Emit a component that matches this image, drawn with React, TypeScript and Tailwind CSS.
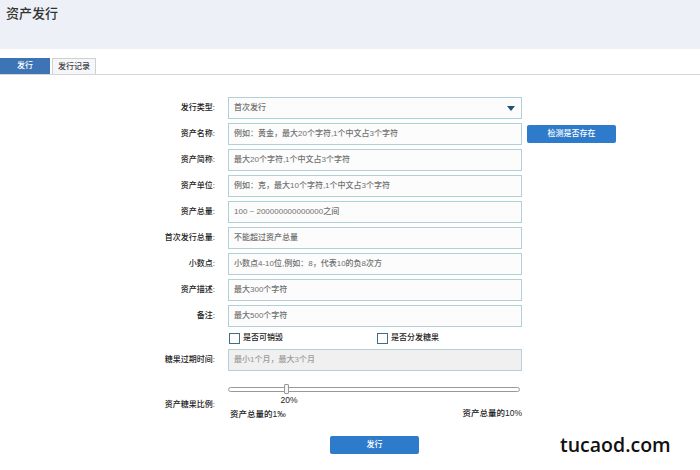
const font = { fontFamily: '"Liberation Sans", "Noto Sans CJK SC", sans-serif' };

const rows: { label: string; placeholder: string; select?: boolean; check?: boolean }[] = [
  { label: '发行类型:', placeholder: '首次发行', select: true },
  { label: '资产名称:', placeholder: '例如：黄金，最大20个字符,1个中文占3个字符', check: true },
  { label: '资产简称:', placeholder: '最大20个字符,1个中文占3个字符' },
  { label: '资产单位:', placeholder: '例如：克，最大10个字符,1个中文占3个字符' },
  { label: '资产总量:', placeholder: '100 ~ 200000000000000之间' },
  { label: '首次发行总量:', placeholder: '不能超过资产总量' },
  { label: '小数点:', placeholder: '小数点4-10位,例如：8，代表10的负8次方' },
  { label: '资产描述:', placeholder: '最大300个字符' },
  { label: '备注:', placeholder: '最大500个字符' },
];

function Label({ children }: { children: React.ReactNode }) {
  return <div className="w-[216px] shrink-0 pr-[1px] mr-[12px] text-right text-[8px] font-medium text-[#222]">{children}</div>;
}

export default function App() {
  return (
    <div className="w-[700px] h-[470px] bg-white overflow-hidden" style={font}>
      {/* Header */}
      <div className="h-[49px] bg-[#eef0f7] px-[6px] pt-[4px]">
        <h1 className="text-[13px] font-medium text-[#333]">资产发行</h1>
      </div>

      {/* Tabs */}
      <div className="mt-[9px] flex items-end gap-[2px] border-b border-[#d6d6d6] h-[17px]">
        <div className="w-[50px] h-[16px] bg-[#3c74b6] text-white text-[8px] font-medium flex items-center justify-center">发行</div>
        <div className="w-[44px] h-[16px] bg-[#f6f7fb] border border-b-0 border-[#d0d0d0] text-[#444] text-[8px] font-medium flex items-center justify-center">发行记录</div>
      </div>

      {/* Form */}
      <div className="mt-[22px] flex flex-col gap-[4px]">
        {rows.map((r) => (
          <div key={r.label} className="flex items-center h-[22px]">
            <Label>{r.label}</Label>
            <div className="w-[294px] h-[22px] border border-[#b3d0d6] bg-[#fcfcfc] flex items-center justify-between px-[5px] text-[8px] font-medium text-[#707070]">
              <span>{r.placeholder}</span>
              {r.select && <span className="w-0 h-0 border-l-[4px] border-r-[4px] border-t-[5px] border-l-transparent border-r-transparent border-t-[#1f4f7a] mr-[1px]" />}
            </div>
            {r.check && (
              <button className="ml-[5px] w-[89px] h-[18px] rounded-[2px] bg-[#2f7bcb] text-white text-[8px] font-medium">检测是否存在</button>
            )}
          </div>
        ))}

        {/* checkboxes */}
        <div className="flex items-center h-[14px] pl-[229px] text-[8px] font-medium text-[#222]">
          <div className="flex items-center gap-[3px] w-[148px]">
            <span className="w-[11px] h-[11px] border border-[#3f6d8a] bg-white" />
            <span>是否可销毁</span>
          </div>
          <div className="flex items-center gap-[3px]">
            <span className="w-[11px] h-[11px] border border-[#3f6d8a] bg-white" />
            <span>是否分发糖果</span>
          </div>
        </div>

        <div className="flex items-center h-[22px]">
          <Label>糖果过期时间:</Label>
          <div className="w-[294px] h-[22px] border border-[#b3d0d6] bg-[#f0f0f0] flex items-center px-[5px] text-[8px] font-medium text-[#9a9a9a]">
            最小1个月，最大3个月
          </div>
        </div>

        {/* slider */}
        <div className="flex mt-[9px] leading-[12px]">
          <Label>
            <div className="pt-[15px]">资产糖果比例:</div>
          </Label>
          <div className="w-[294px] flex flex-col">
            <div className="relative h-[10px] flex items-center">
              <div className="w-[292px] h-[5px] rounded-full border border-[#999] bg-white" />
              <div className="absolute left-[56px] top-0 w-[5px] h-[10px] border border-[#999] bg-[#f6f6f6] rounded-[1px]" />
            </div>
            <div className="w-[122px] text-center text-[8.5px] font-medium text-[#222]">20%</div>
            <div className="flex justify-between items-end text-[8.5px] font-medium text-[#222] pl-[2px] mt-[1px]">
              <span className="translate-y-[1px]">资产总量的1‰</span>
              <span>资产总量的10%</span>
            </div>
          </div>
        </div>

        <div className="pl-[330px] mt-[10px] flex items-center">
          <button className="w-[89px] h-[18px] rounded-[2px] bg-[#2f7bcb] text-white text-[8px] font-medium">发行</button>
          <span className="ml-[141px] text-[19.5px] leading-[24px] font-semibold text-[#111]" style={{ fontFamily: '"Open Sans", sans-serif' }}>tucaod.com</span>
        </div>
      </div>
    </div>
  );
}
